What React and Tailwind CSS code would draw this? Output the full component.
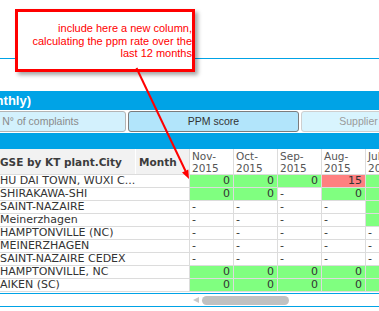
import React from 'react';

const months = [
  ['Nov-', '2015'],
  ['Oct-', '2015'],
  ['Sep-', '2015'],
  ['Aug-', '2015'],
  ['Jul-', '2015'],
];

const rows = [
  ['HU DAI TOWN, WUXI C...', ['0', '0', '0', '15', '0']],
  ['SHIRAKAWA-SHI', ['0', '0', '-', '0', '0']],
  ['SAINT-NAZAIRE', ['-', '-', '-', '-', '0']],
  ['Meinerzhagen', ['-', '-', '-', '-', '0']],
  ['HAMPTONVILLE (NC)', ['-', '-', '-', '-', '-']],
  ['MEINERZHAGEN', ['-', '-', '-', '-', '-']],
  ['SAINT-NAZAIRE CEDEX', ['-', '-', '-', '-', '-']],
  ['HAMPTONVILLE, NC', ['0', '0', '0', '0', '0']],
  ['AIKEN (SC)', ['0', '0', '0', '0', '0']],
];

function Cell({ value }) {
  if (value === '-') {
    return (
      <div className="w-[44px] shrink-0 border-r border-[#dcdcdc] bg-white pl-[2px] text-left">-</div>
    );
  }
  const bad = Number(value) > 0;
  return (
    <div
      className={
        bad
          ? 'w-[44px] shrink-0 border-r border-[#dcdcdc] bg-[#ff8080] pr-[3px] text-right'
          : 'w-[44px] shrink-0 border-r border-[#dcdcdc] bg-[#80ff80] pr-[3px] text-right'
      }
    >
      {value}
    </div>
  );
}

export default function App() {
  return (
    <div className="relative w-[379px] h-[311px] overflow-hidden bg-white font-['DejaVu_Sans',sans-serif]">
      <div className="h-[58px]" />
      <div className="h-px bg-[#00a3e6]" />
      <div className="h-[32px]" />

      {/* title bar */}
      <div className="flex h-[19px] bg-[#00a3e6]">
        <div className="flex w-[31px] justify-end overflow-hidden">
          <span className="whitespace-nowrap font-['Liberation_Sans',sans-serif] text-[13px] font-bold leading-[19px] text-white">
            Supplier complaints (monthly)
          </span>
        </div>
      </div>

      {/* tab buttons */}
      <div className="-ml-[45px] flex h-[23px] gap-[2px] pt-px font-['Liberation_Sans',sans-serif] text-[10.5px]">
        <button className="h-[21px] w-[171px] shrink-0 rounded-[3px] border border-[#b4b4b4] bg-[#d3f1fd] text-[#8a8a8a]">
          N° of complaints
        </button>
        <button className="h-[21px] w-[171px] shrink-0 rounded-[3px] border border-[#7c7c7c] bg-[#b2e5fb] text-[#333]">
          PPM score
        </button>
        <button className="h-[21px] w-[171px] shrink-0 overflow-hidden whitespace-nowrap rounded-[3px] border border-[#cfcfcf] bg-[#d8f4fe] text-[#9a9a9a]">
          Supplier evaluations
        </button>
      </div>

      <div className="h-[16px] bg-[#00a3e6]" />

      {/* table header */}
      <div className="flex h-[26px] border-b border-[#dcdcdc] text-[10.5px]">
        <div className="flex w-[136px] shrink-0 items-center border-r border-white bg-[#f2f2f2] pt-[2px] font-bold text-[#3c3c3c]">
          GSE by KT plant.City
        </div>
        <div className="flex w-[54px] shrink-0 items-center border-r border-[#dcdcdc] bg-[#f2f2f2] pl-[3px] pt-[2px] font-bold text-[#3c3c3c]">
          Month
        </div>
        {months.map(([m, y]) => (
          <div key={m} className="w-[44px] shrink-0 border-r border-[#dcdcdc] bg-white pl-[2px] pt-[1px] leading-[12px] text-[#555]">
            <div>{m}</div>
            <div>{y}</div>
          </div>
        ))}
      </div>

      {/* rows */}
      <div className="text-[11px] leading-[12px] text-[#333]">
        {rows.map(([city, vals]) => (
          <div key={city} className="flex h-[13px] border-b border-[#dcdcdc]">
            <div className="w-[190px] shrink-0 whitespace-nowrap border-r border-[#dcdcdc]">{city}</div>
            {vals.map((v, i) => (
              <Cell key={i} value={v} />
            ))}
          </div>
        ))}
      </div>

      <div className="h-px" />
      <div className="h-px bg-[#00a3e6]" />

      {/* scrollbar */}
      <div className="flex h-[12px] items-center">
        <div className="w-[193px] shrink-0" />
        <svg width="6" height="6" viewBox="0 0 6 6" className="shrink-0">
          <polygon points="0,3 6,0 6,6" fill="#c8c8c8" />
        </svg>
        <div className="ml-[3px] h-[9px] w-[87px] rounded-full bg-[#c1c1c1]" />
      </div>
      <div className="h-px bg-[#00a3e6]" />

      {/* callout */}
      <div className="absolute left-[15px] top-[9px] h-[63px] w-[180px] border-[3px] border-[#ff0000] bg-white pt-[10px] text-right font-['Liberation_Sans',sans-serif] text-[11px] leading-[12.5px] text-[#ff0000] shadow-[3px_3px_4px_rgba(0,0,0,0.35)]">
        <div>include here a new column,</div>
        <div>calculating the ppm rate over the</div>
        <div>last 12 months</div>
      </div>

      {/* arrow */}
      <svg className="pointer-events-none absolute left-0 top-0" width="379" height="311">
        <line x1="136.5" y1="68" x2="185.5" y2="171" stroke="#ff0000" strokeWidth="2" />
        <polygon points="189,179 182,172.4 188.3,169.4" fill="#ff0000" />
      </svg>
    </div>
  );
}
